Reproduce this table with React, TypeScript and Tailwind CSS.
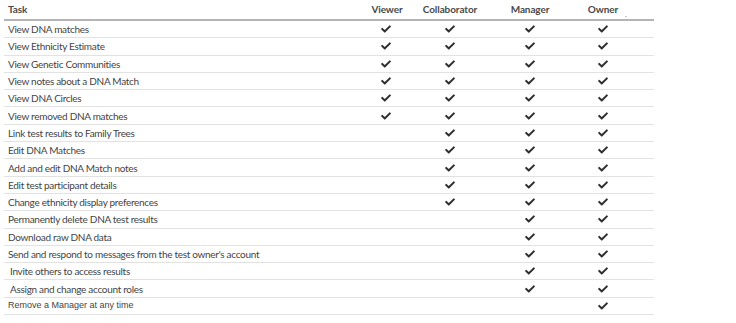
import React from 'react';
import { FaCheck } from 'react-icons/fa';

type Row = { task: string; roles: [boolean, boolean, boolean, boolean]; indent?: boolean; alt?: boolean };

const rows: Row[] = [
  { task: 'View DNA matches', roles: [true, true, true, true] },
  { task: 'View Ethnicity Estimate', roles: [true, true, true, true] },
  { task: 'View Genetic Communities', roles: [true, true, true, true] },
  { task: 'View notes about a DNA Match', roles: [true, true, true, true] },
  { task: 'View DNA Circles', roles: [true, true, true, true] },
  { task: 'View removed DNA matches', roles: [true, true, true, true] },
  { task: 'Link test results to Family Trees', roles: [false, true, true, true] },
  { task: 'Edit DNA Matches', roles: [false, true, true, true] },
  { task: 'Add and edit DNA Match notes', roles: [false, true, true, true] },
  { task: 'Edit test participant details', roles: [false, true, true, true] },
  { task: 'Change ethnicity display preferences', roles: [false, true, true, true] },
  { task: 'Permanently delete DNA test results', roles: [false, false, true, true] },
  { task: 'Download raw DNA data', roles: [false, false, true, true] },
  { task: "Send and respond to messages from the test owner's account", roles: [false, false, true, true] },
  { task: 'Invite others to access results', roles: [false, false, true, true], indent: true },
  { task: 'Assign and change account roles', roles: [false, false, true, true], indent: true },
  { task: 'Remove a Manager at any time', roles: [false, false, false, true], alt: true },
];

const grid = 'grid grid-cols-[350px_64px_64px_96px_50px_1fr]';

export default function App() {
  return (
    <div className="w-[736px] h-[323px] bg-white pl-[4px] font-['Lato','Open_Sans',sans-serif]">
      <div className="w-[650px]">
        <div className={`${grid} h-[21px] items-center border-b-2 border-[#b4b4b4] text-[10px] font-bold text-[#4a4a4a] tracking-[-0.1px]`}>
          <div className="pl-[4px]">Task</div>
          <div className="text-center pl-[2px]">Viewer</div>
          <div className="text-center">Collaborator</div>
          <div className="text-center">Manager</div>
          <div className="text-center relative">
            Owner
            <span className="absolute right-[1px] top-[14px] h-px w-[2px] bg-[#c8c8c8]" />
          </div>
          <div />
        </div>
        {rows.map((r) => (
          <div
            key={r.task}
            className={`${grid} h-[17.3px] items-center border-b border-[#e2e2e2] text-[10px] text-[#444]`}
          >
            <div
              className={`${r.indent ? 'pl-[6px]' : 'pl-[4px]'} ${r.alt ? "font-['Liberation_Sans',sans-serif] text-[9px] tracking-normal" : 'tracking-[-0.3px]'} whitespace-nowrap leading-none`}
            >
              {r.task}
            </div>
            {r.roles.map((on, i) => (
              <div key={i} className="flex justify-center">
                {on && <FaCheck className="text-[#2e2e2e]" size={10} />}
              </div>
            ))}
            <div />
          </div>
        ))}
      </div>
    </div>
  );
}
